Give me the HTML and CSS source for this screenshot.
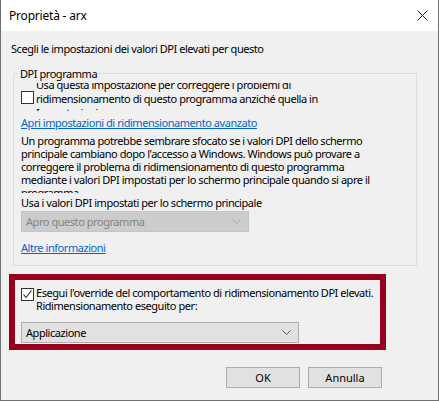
FILE: index.html
```html
<!DOCTYPE html>
<html>
<head>
    <title>Proprietà - arx</title>
    <link rel="stylesheet" href="styles.css">
</head>
<body>
    <div class="window">
        <div class="titlebar">
            <span class="title">Proprietà - arx</span>
            <svg class="close" width="11" height="11" viewBox="0 0 11 11">
                <path d="M0.5 0.5L10.5 10.5M10.5 0.5L0.5 10.5" stroke="#1a1a1a" stroke-width="1" fill="none"/>
            </svg>
        </div>
        <div class="content">
            <p class="intro">Scegli le impostazioni dei valori DPI elevati per questo</p>

            <fieldset class="group">
                <legend>DPI programma</legend>
                <div class="check-row">
                    <span class="checkbox"></span>
                    <div class="clip">
                        <div class="clip-text">Usa questa impostazione per correggere i problemi di<br>ridimensionamento di questo programma anziché quella in<br>Impostazioni</div>
                    </div>
                </div>
                <a class="link" href="#">Apri impostazioni di ridimensionamento avanzato</a>
                <p class="desc">Un programma potrebbe sembrare sfocato se i valori DPI dello schermo<br>principale cambiano dopo l'accesso a Windows. Windows può provare a<br>correggere il problema di ridimensionamento di questo programma<br>mediante i valori DPI impostati per lo schermo principale quando si apre il<br>programma</p>
                <p class="label">Usa i valori DPI impostati per lo schermo principale</p>
                <div class="select select-disabled">
                    <span>Apro questo programma</span>
                    <svg width="9" height="5" viewBox="0 0 9 5"><path d="M0.5 0.5L4.5 4.5L8.5 0.5" stroke="#a6a6a6" fill="none"/></svg>
                </div>
                <a class="link more" href="#">Altre informazioni</a>
            </fieldset>

            <div class="override">
                <div class="override-row">
                    <span class="checkbox">
                        <svg width="11" height="11" viewBox="0 0 11 11"><path d="M1.5 5.5L4 8.5L9.5 1.5" stroke="#222" stroke-width="1.1" fill="none"/></svg>
                    </span>
                    <div class="override-text">Esegui l'override del comportamento di ridimensionamento DPI elevati.<br>Ridimensionamento eseguito per:</div>
                </div>
                <div class="select select-app">
                    <span>Applicazione</span>
                    <svg width="9" height="5" viewBox="0 0 9 5"><path d="M0.5 0.5L4.5 4.5L8.5 0.5" stroke="#555" fill="none"/></svg>
                </div>
            </div>

            <div class="buttons">
                <button class="btn">OK</button>
                <button class="btn">Annulla</button>
            </div>
        </div>
    </div>
</body>
</html>
```

FILE: styles.css
```css
body {
    margin: 0;
    font-family: "Segoe UI", "Noto Sans", sans-serif;
    font-size: 11px;
    letter-spacing: -0.45px;
    color: #000;
}

.window {
    width: 439px;
    height: 401px;
    box-sizing: border-box;
    border: 1px solid #707070;
    border-top: none;
    background-color: #f0f0f0;
}

.titlebar {
    height: 31px;
    background-color: #fff;
    display: flex;
    align-items: center;
    justify-content: space-between;
    padding: 0 10px 0 8px;
}

.title {
    font-size: 12px;
    letter-spacing: -0.2px;
}

.content {
    padding: 10px 10px 0 10px;
}

.intro {
    margin: 0;
    line-height: 16px;
}

.group {
    margin: 9px 0 0 2px;
    width: 404px;
    box-sizing: border-box;
    border: 1px solid #dcdcdc;
    padding: 0 7px 9px 7px;
    min-width: 0;
}

.group legend {
    padding: 0 2px;
    margin-left: -3px;
    line-height: 15px;
}

.check-row {
    display: flex;
    align-items: center;
    gap: 2px;
    margin-top: 2px;
}

.checkbox {
    width: 11px;
    height: 11px;
    border: 1px solid #333;
    background-color: #fff;
    display: flex;
    flex-shrink: 0;
}

.clip {
    height: 28px;
    overflow: hidden;
}

.clip-text {
    margin-top: -5px;
    line-height: 14px;
    white-space: nowrap;
}

.link {
    display: block;
    color: #0066cc;
    line-height: 16px;
    margin-top: 4px;
    width: max-content;
}

.desc {
    margin: 3px 0 0 0;
    line-height: 13px;
    height: 59px;
    overflow: hidden;
    white-space: nowrap;
}

.label {
    margin: 2px 0 0 0;
    line-height: 16px;
}

.select {
    height: 21px;
    box-sizing: border-box;
    display: flex;
    align-items: center;
    justify-content: space-between;
    padding: 0 7px 0 4px;
}

.select-disabled {
    width: 228px;
    background-color: #cccccc;
    border: 1px solid #c4c4c4;
    color: #838383;
}

.more {
    margin-top: 8px;
}

.override {
    margin: 8px 0 0 -2px;
    width: 377px;
    box-sizing: border-box;
    border: 6px solid #96001e;
    padding: 6px 6px 1px 6px;
}

.override-row {
    display: flex;
    align-items: flex-start;
    gap: 2px;
}

.override-row .checkbox {
    margin-top: 2px;
}

.override-text {
    line-height: 13px;
    white-space: nowrap;
}

.select-app {
    margin-top: 10px;
    width: 278px;
    background-color: #e1e1e1;
    border: 1px solid #adadad;
}

.buttons {
    display: flex;
    justify-content: flex-end;
    gap: 8px;
    margin: 17px 46px 0 0;
}

.btn {
    width: 74px;
    height: 21px;
    font-family: inherit;
    font-size: 11px;
    background-color: #e1e1e1;
    border: 1px solid #adadad;
    padding: 0;
}
```
